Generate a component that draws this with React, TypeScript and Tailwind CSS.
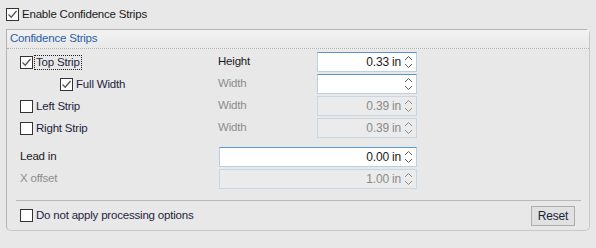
import React from 'react';

const font = { fontFamily: '"Liberation Sans", Arial, sans-serif' };

const CheckBox = ({ checked }: { checked?: boolean }) => (
  <span className="flex h-[13px] w-[13px] shrink-0 items-center justify-center border border-[#333333] bg-white">
    {checked && (
      <svg width="11" height="11" viewBox="0 0 11 11">
        <path d="M1.5 5.5 L4.2 8.2 L9.5 2" fill="none" stroke="#555555" strokeWidth="1.3" />
      </svg>
    )}
  </span>
);

const Arrows = ({ disabled }: { disabled?: boolean }) => (
  <svg width="9" height="16" viewBox="0 0 9 16" className="shrink-0">
    <path
      d="M1 6 L4.5 2.5 L8 6 M1 10 L4.5 13.5 L8 10"
      fill="none"
      stroke={disabled ? '#8c8c8c' : '#606060'}
      strokeWidth="1"
    />
  </svg>
);

const SpinBox = ({ value, disabled, className }: { value?: string; disabled?: boolean; className: string }) => (
  <div
    className={
      'flex h-[20px] items-center justify-end gap-[3px] border pr-[3px] text-[12px] ' +
      (disabled
        ? 'border-[#c9d6e3] bg-[#ebebeb] text-[#8a8a8a] '
        : 'border-[#b9cfe4] border-t-[#5b97cf] bg-white text-[#1a1a1a] ') +
      className
    }
  >
    <span>{value}</span>
    <Arrows disabled={disabled} />
  </div>
);

const StripRow = ({
  label,
  checked,
  indent,
  focused,
  field,
  value,
  enabled,
}: {
  label: string;
  checked?: boolean;
  indent?: boolean;
  focused?: boolean;
  field: string;
  value?: string;
  enabled?: boolean;
}) => (
  <div className="flex h-[22px] items-center">
    <div className={'flex w-[211px] items-center gap-[1px] ' + (indent ? 'pl-[53px]' : 'pl-[13px]')}>
      <CheckBox checked={checked} />
      <span
        className={
          'px-[1px] leading-[13px] text-[#1e1e3c] ' +
          (focused ? 'border border-dotted border-[#222222]' : 'border border-transparent')
        }
      >
        {label}
      </span>
    </div>
    <span className={'w-[99px] ' + (field === 'Height' ? 'text-[#1a1a1a]' : 'text-[#8d8d8d]')}>{field}</span>
    <SpinBox value={value} disabled={!enabled} className="w-[100px]" />
  </div>
);

export default function App() {
  return (
    <div className="h-[248px] w-[596px] bg-[#e8e8e8] text-[11.5px] tracking-[-0.2px]" style={font}>
      <div className="flex h-[29px] items-center gap-[3px] pb-[1px] pl-[6px] pt-[1px]">
        <CheckBox checked />
        <span className="text-[#1a1a1a]">Enable Confidence Strips</span>
      </div>

      <div className="ml-[6px] h-[202px] w-[584px] rounded-tr-[5px] rounded-b-[5px] border border-[#b4b4b4] border-r-[#c8c8c8] border-b-[#c8c8c8]">
        <div className="flex h-[19px] items-center border-b border-dotted border-[#b0b0b0] bg-gradient-to-b from-[#f2f2f2] to-[#e9e9e9] pl-[3px] text-[#2a5ea8]">
          Confidence Strips
        </div>

        <div className="pt-[2px]">
          <StripRow label="Top Strip" checked focused field="Height" value="0.33 in" enabled />
          <StripRow label="Full Width" checked indent field="Width" enabled />
          <StripRow label="Left Strip" field="Width" value="0.39 in" />
          <StripRow label="Right Strip" field="Width" value="0.39 in" />

          <div className="mt-[7px] flex h-[22px] items-center">
            <span className="w-[212px] pl-[13px] text-[#1a1a1a]">Lead in</span>
            <SpinBox value="0.00 in" enabled className="w-[198px]" />
          </div>
          <div className="flex h-[22px] items-center">
            <span className="w-[212px] pl-[13px] text-[#8d8d8d]">X offset</span>
            <SpinBox value="1.00 in" disabled className="w-[198px]" />
          </div>

          <div className="ml-[9px] mt-[10px] w-[565px] border-t border-[#b8b8b8]" />

          <div className="mt-[2px] flex h-[25px] items-center justify-between pl-[13px] pr-[14px]">
            <div className="flex items-center gap-[3px]">
              <CheckBox />
              <span className="text-[#1e1e3c]">Do not apply processing options</span>
            </div>
            <button className="h-[20px] w-[44px] border border-[#adadad] bg-[#e1e1e1] text-[12px] text-[#1e1e3c]">
              Reset
            </button>
          </div>
        </div>
      </div>
    </div>
  );
}
